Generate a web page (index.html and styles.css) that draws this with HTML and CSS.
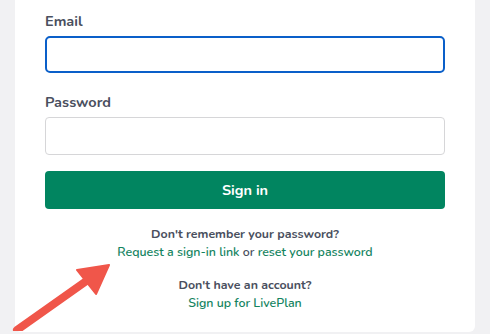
FILE: index.html
```html
<!DOCTYPE html>
<html>
<head>
<meta charset="utf-8">
<link rel="stylesheet" href="styles.css">
</head>
<body>
<div class="card">
  <form class="form">
    <label class="label">Email</label>
    <div class="input input-focus"></div>
    <label class="label label-pw">Password</label>
    <div class="input"></div>
    <button class="btn" type="button">Sign in</button>
    <div class="help">
      <p class="q">Don't remember your password?</p>
      <p class="links"><a>Request a sign-in link</a> or <a>reset your password</a></p>
    </div>
    <div class="help help2">
      <p class="q">Don't have an account?</p>
      <p class="links"><a>Sign up for LivePlan</a></p>
    </div>
  </form>
</div>
<svg class="arrow" width="120" height="80" viewBox="0 0 120 80">
  <line x1="17" y1="79" x2="92" y2="26" stroke="#f0564a" stroke-width="8" stroke-linecap="round"/>
  <polygon points="109,14 77,19 96,43" fill="#f0564a" stroke="#f0564a" stroke-width="2" stroke-linejoin="round"/>
</svg>
</body>
</html>
```
FILE: styles.css
```css
html, body {
  margin: 0;
  padding: 0;
  height: 334px;
  overflow: hidden;
}
body {
  background: #f1f1f3;
  font-family: "Nunito", "Lato", "Noto Sans", sans-serif;
  color: #4a4f5e;
  position: relative;
}
.card {
  margin: 0 15px;
  height: 332px;
  background: #ffffff;
  border-radius: 0 0 6px 6px;
  box-sizing: border-box;
  padding: 11px 30px 0;
}
.form {
  display: flex;
  flex-direction: column;
}
.label {
  font-size: 14.5px;
  font-weight: 700;
  line-height: 20px;
  color: #4a4f5e;
  margin-bottom: 5px;
}
.label-pw {
  margin-top: 19px;
}
.input {
  height: 38px;
  box-sizing: border-box;
  border: 1px solid #d6d6d8;
  border-radius: 4px;
  background: #fff;
}
.input-focus {
  height: 37px;
  border: 2px solid #0a5fc9;
  border-radius: 5px;
}
.btn {
  margin-top: 16px;
  height: 38px;
  border: none;
  border-radius: 4px;
  background: #018560;
  color: #fff;
  font-family: inherit;
  font-size: 14.5px;
  font-weight: 700;
}
.help {
  margin-top: 16px;
  text-align: center;
  font-size: 12.4px;
  line-height: 18px;
}
.help2 {
  margin-top: 15px;
}
.help p {
  margin: 0;
}
.q {
  font-weight: 700;
  color: #4a4f5e;
}
.links {
  font-weight: 600;
  color: #4a4f5e;
}
.links a {
  color: #15845f;
}
.arrow {
  position: absolute;
  left: 0;
  top: 251px;
}
```
